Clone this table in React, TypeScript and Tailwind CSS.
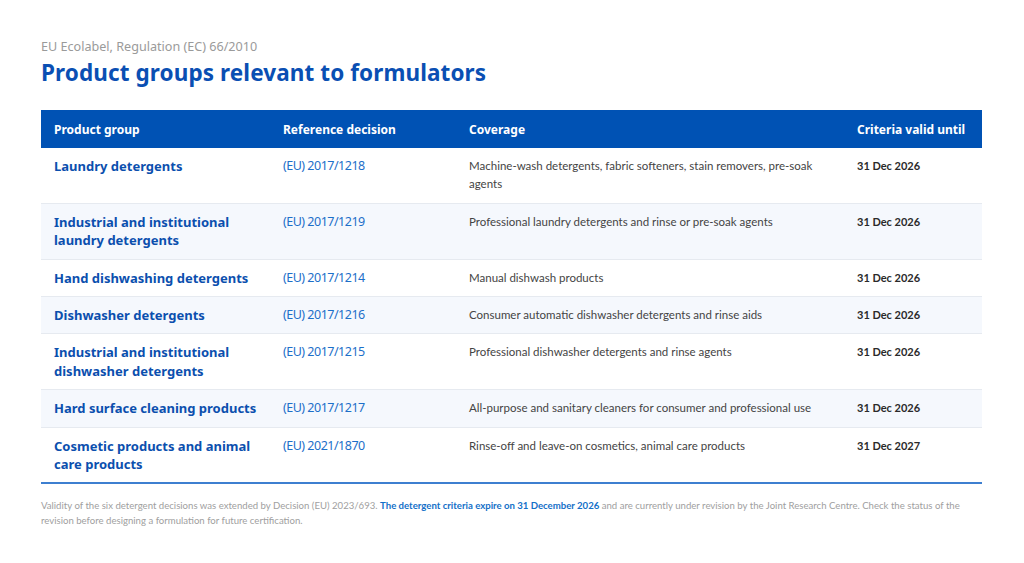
import React from "react";

const rows = [
  { g: "Laundry detergents", r: "(EU) 2017/1218", c: "Machine-wash detergents, fabric softeners, stain removers, pre-soak agents", d: "31 Dec 2026" },
  { g: "Industrial and institutional laundry detergents", r: "(EU) 2017/1219", c: "Professional laundry detergents and rinse or pre-soak agents", d: "31 Dec 2026" },
  { g: "Hand dishwashing detergents", r: "(EU) 2017/1214", c: "Manual dishwash products", d: "31 Dec 2026" },
  { g: "Dishwasher detergents", r: "(EU) 2017/1216", c: "Consumer automatic dishwasher detergents and rinse aids", d: "31 Dec 2026" },
  { g: "Industrial and institutional dishwasher detergents", r: "(EU) 2017/1215", c: "Professional dishwasher detergents and rinse agents", d: "31 Dec 2026" },
  { g: "Hard surface cleaning products", r: "(EU) 2017/1217", c: "All-purpose and sanitary cleaners for consumer and professional use", d: "31 Dec 2026" },
  { g: "Cosmetic products and animal care products", r: "(EU) 2021/1870", c: "Rinse-off and leave-on cosmetics, animal care products", d: "31 Dec 2027" },
];

const head = "font-['Noto_Sans',sans-serif]";
const body = "font-['Lato',sans-serif]";

export default function App() {
  return (
    <div className="w-[1024px] h-[563px] bg-white px-[41px] pt-[39px]">
      <div className={`${head} text-[12.6px] leading-[16px] text-[#9a9a9a]`}>EU Ecolabel, Regulation (EC) 66/2010</div>
      <h1 className={`${head} mt-[3px] text-[22.5px] leading-[30px] tracking-[0.1px] font-bold text-[#0a4fb3]`}>Product groups relevant to formulators</h1>
      <table className="mt-[22px] w-[941px] table-fixed border-collapse">
        <colgroup>
          <col className="w-[229px]" />
          <col className="w-[186px]" />
          <col className="w-[388px]" />
          <col className="w-[138px]" />
        </colgroup>
        <thead>
          <tr className="bg-[#0052b4] h-[38px]">
            {["Product group", "Reference decision", "Coverage", "Criteria valid until"].map((h) => (
              <th key={h} className={`${head} text-left align-middle px-[13px] pt-[1px] text-[12px] font-bold text-white`}>{h}</th>
            ))}
          </tr>
        </thead>
        <tbody className="border-b-2 border-[#3d7fd0]">
          {rows.map((row, i) => (
            <tr key={i} className={`${i % 2 === 1 ? "bg-[#f5f8fd]" : "bg-white"} ${i > 0 ? "border-t border-[#e6eaf0]" : ""}`}>
              <td className={`${head} align-top px-[13px] py-[9px] text-[13px] leading-[18.4px] font-bold text-[#0b4fae]`}>{row.g}</td>
              <td className={`${head} align-top px-[13px] py-[9px] text-[12.5px] leading-[18.4px] tracking-[-0.5px] text-[#1d6fc9]`}>{row.r}</td>
              <td className={`${body} align-top px-[13px] py-[9px] text-[11.5px] leading-[18.4px] text-[#444444]`}>{row.c}</td>
              <td className={`${body} align-top px-[13px] py-[9px] text-[11px] leading-[18.4px] font-bold text-[#2a2a2a]`}>{row.d}</td>
            </tr>
          ))}
        </tbody>
      </table>
      <p className={`${body} mt-[14px] w-[925px] text-[9.6px] leading-[15px] text-[#a0a0a0]`}>
        Validity of the six detergent decisions was extended by Decision (EU) 2023/693.{" "}
        <span className="font-bold text-[#1370c8]">The detergent criteria expire on 31 December 2026</span> and are currently under revision by the Joint Research Centre. Check the status of the revision before designing a formulation for future certification.
      </p>
    </div>
  );
}
